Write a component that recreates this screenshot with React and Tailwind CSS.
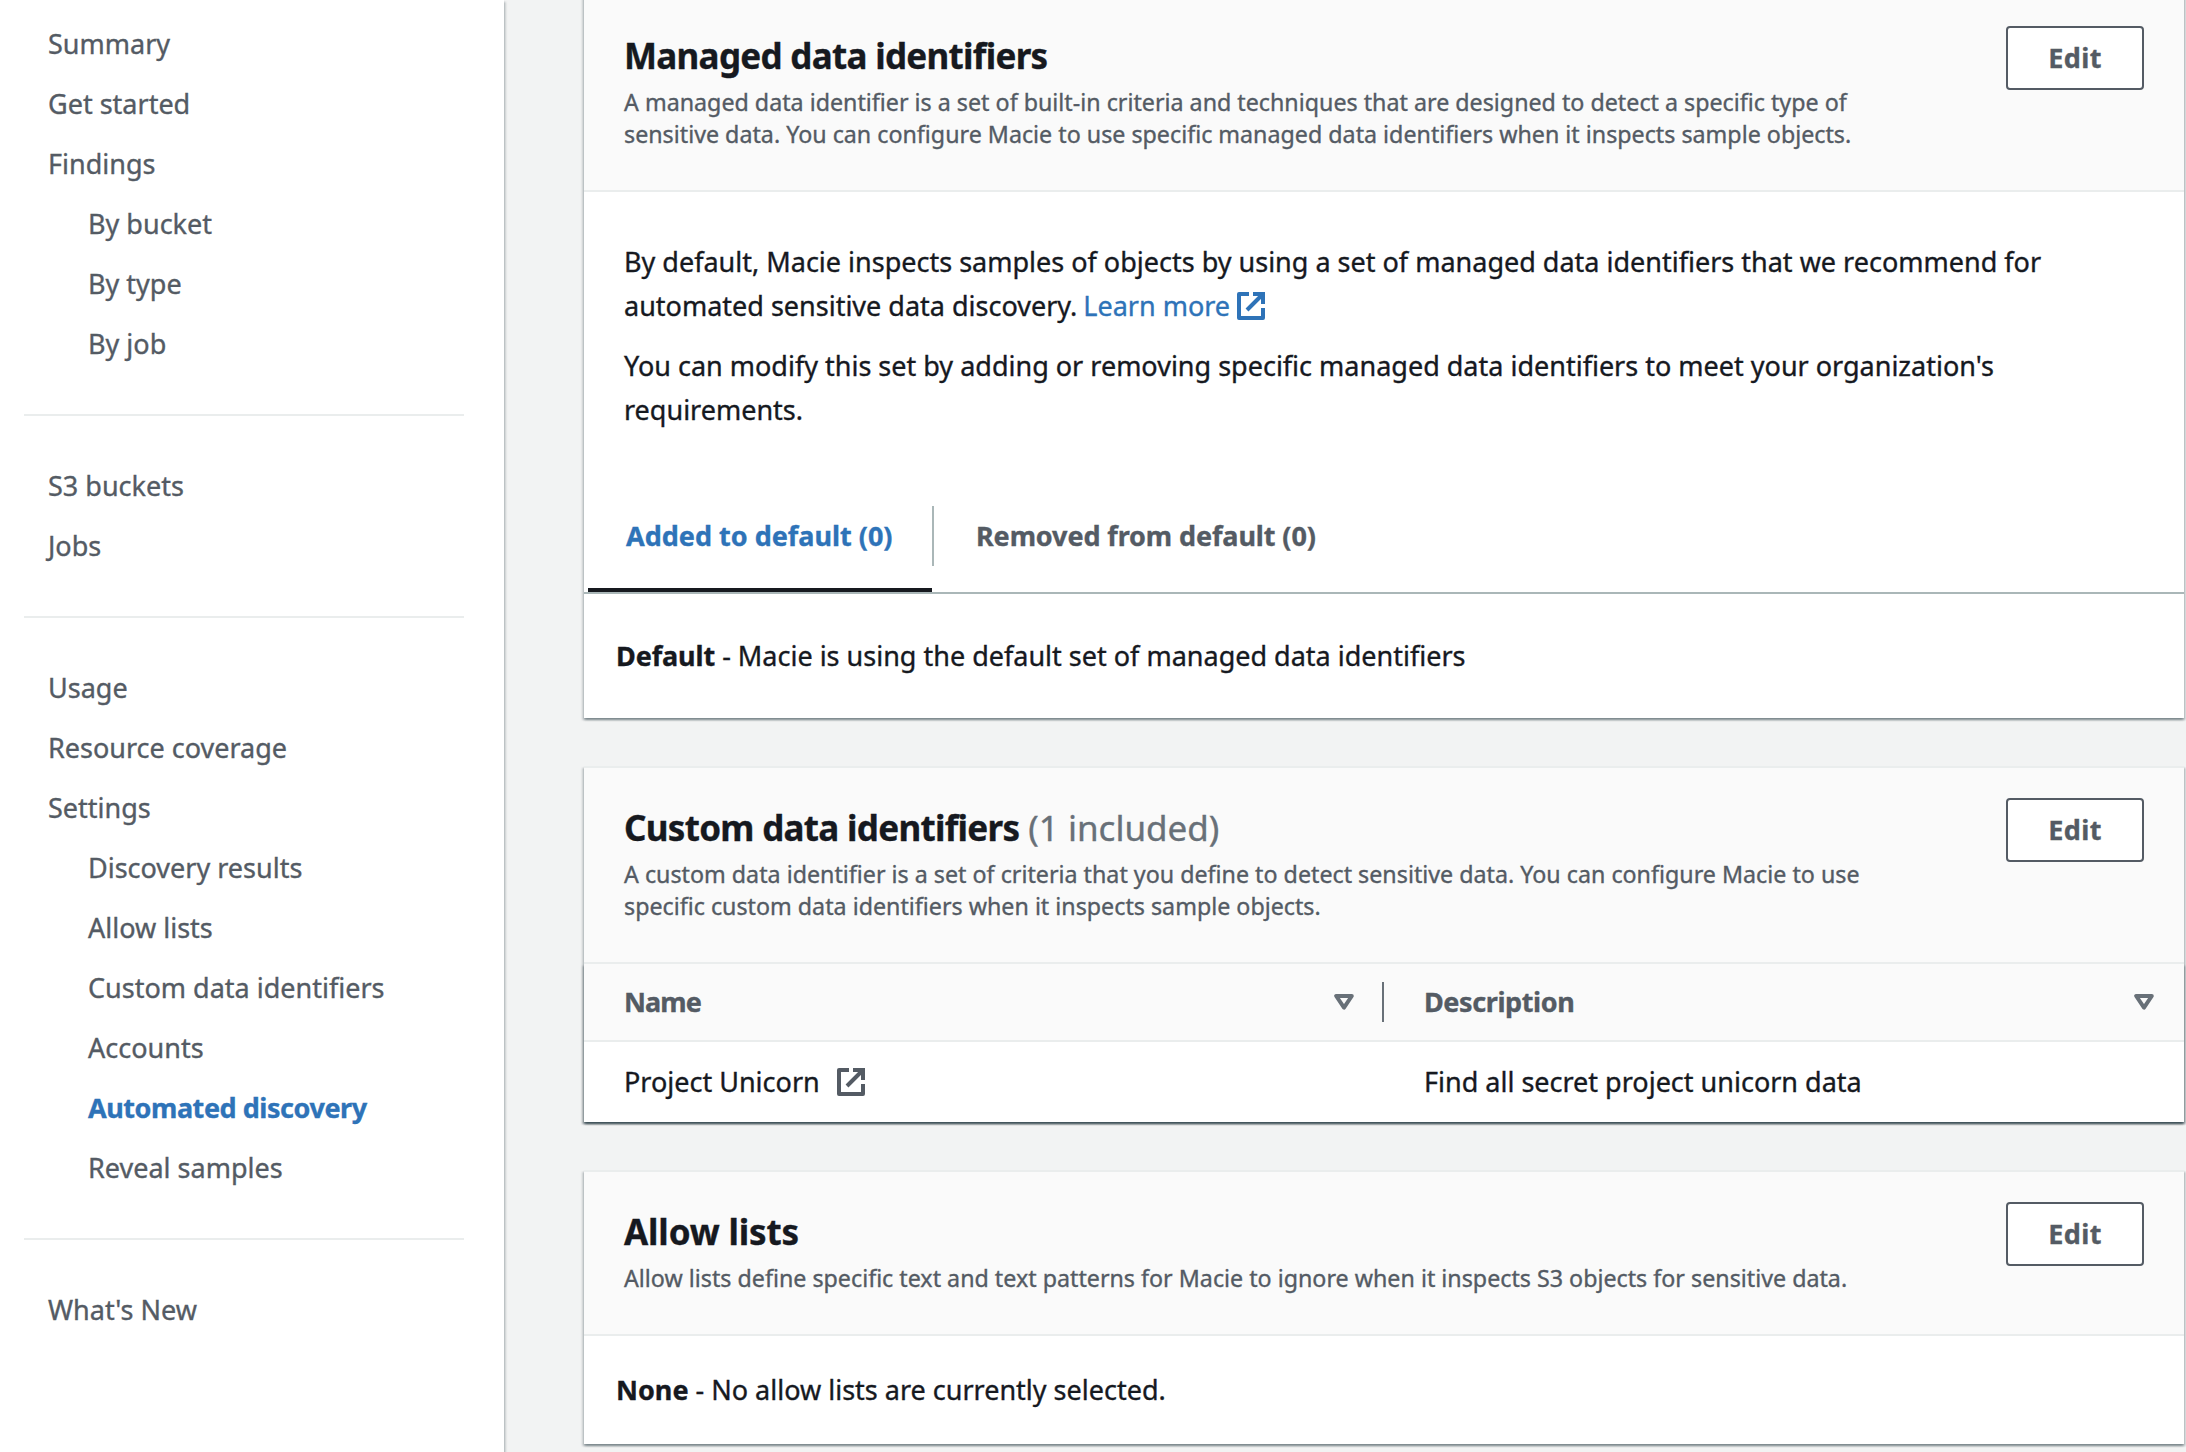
import React from "react";

const CARD_SHADOW =
  "shadow-[0_2px_2px_0_rgba(0,28,36,0.3),2px_2px_2px_0_rgba(0,28,36,0.15),-2px_2px_2px_0_rgba(0,28,36,0.15)]";

const NAV = [
  [
    { label: "Summary" },
    { label: "Get started" },
    { label: "Findings" },
    { label: "By bucket", nested: true },
    { label: "By type", nested: true },
    { label: "By job", nested: true },
  ],
  [{ label: "S3 buckets" }, { label: "Jobs" }],
  [
    { label: "Usage" },
    { label: "Resource coverage" },
    { label: "Settings" },
    { label: "Discovery results", nested: true },
    { label: "Allow lists", nested: true },
    { label: "Custom data identifiers", nested: true },
    { label: "Accounts", nested: true },
    { label: "Automated discovery", nested: true, active: true },
    { label: "Reveal samples", nested: true },
  ],
  [{ label: "What's New" }],
];

function ExternalIcon({ className }) {
  return (
    <svg viewBox="0 0 16 16" fill="none" stroke="currentColor" strokeWidth="2" className={`size-8 shrink-0 ${className}`}>
      <path d="M14 9v5H2V2h5" strokeLinejoin="round" />
      <path d="M9 2h5v5M6 10l8-8" />
    </svg>
  );
}

function SortIcon() {
  return (
    <svg viewBox="0 0 20 16" className="h-4 w-5 text-[#687078]" fill="none" stroke="currentColor" strokeWidth="4" strokeLinejoin="round">
      <path d="M2.2 2h15.6L10 13.6z" />
    </svg>
  );
}

function NavItem({ label, nested, active }) {
  return (
    <li
      className={`flex h-[60px] items-center whitespace-nowrap ${nested ? "pl-[88px]" : "pl-12"} ${
        active ? "font-bold tracking-[-0.45px] text-[#2e73b8]" : ""
      }`}
    >
      {label}
    </li>
  );
}

function Sidebar() {
  return (
    <nav className={`relative w-[504px] shrink-0 bg-white pt-[14px] text-[#545b64] ${CARD_SHADOW}`}>
      {NAV.map((group, i) => (
        <div key={i}>
          {i > 0 && <hr className="my-10 ml-6 w-[440px] border-t-2 border-[#eaeded]" />}
          <ul>
            {group.map((item) => (
              <NavItem key={item.label} {...item} />
            ))}
          </ul>
        </div>
      ))}
    </nav>
  );
}

function CardHeader({ title, titleTracking = "tracking-[-0.7px]", counter, lines }) {
  return (
    <header className="flex justify-between border-b-2 border-[#eaeded] bg-[#fafafa] px-10 pb-10">
      <div className="whitespace-nowrap pt-[38px]">
        <h2 className="flex gap-[9px] text-[35px] leading-[44px]">
          <span className={`font-bold ${titleTracking}`}>{title}</span>
          {counter && <span className="text-[#687078]">{counter}</span>}
        </h2>
        <div className="mt-2 text-[23.25px] leading-8 text-[#545b64]">
          {lines.map((line) => (
            <p key={line}>{line}</p>
          ))}
        </div>
      </div>
      <button className="mt-[30px] h-16 w-[138px] rounded-[4px] border-2 border-[#545b64] bg-white font-bold tracking-[0.4px] text-[#545b64]">
        Edit
      </button>
    </header>
  );
}

function Card({ children }) {
  return <section className={`border-t-2 border-[#eaeded] bg-white ${CARD_SHADOW}`}>{children}</section>;
}

export default function App() {
  return (
    <div className="flex h-[1452px] w-[2186px] overflow-hidden bg-[#f2f3f3] font-['Noto_Sans',sans-serif] text-[27px] leading-[44px] text-[#16191f] [-webkit-text-stroke:0.35px]">
      <Sidebar />
      <main className="-mt-[6px] ml-20 flex w-[1600px] shrink-0 flex-col gap-12">
        <Card>
          <CardHeader
            title="Managed data identifiers"
            lines={[
              "A managed data identifier is a set of built-in criteria and techniques that are designed to detect a specific type of",
              "sensitive data. You can configure Macie to use specific managed data identifiers when it inspects sample objects.",
            ]}
          />
          <div className="flex flex-col gap-4 whitespace-nowrap pt-12 pl-10">
            <div>
              <p>By default, Macie inspects samples of objects by using a set of managed data identifiers that we recommend for</p>
              <p className="flex items-center">
                automated sensitive data discovery.
                <a className="ml-[6px] flex items-center text-[#2e73b8]">
                  Learn more
                  <ExternalIcon className="ml-[5px]" />
                </a>
              </p>
            </div>
            <div>
              <p>You can modify this set by adding or removing specific managed data identifiers to meet your organization's</p>
              <p>requirements.</p>
            </div>
          </div>
          <div className="mt-[74px] flex h-[88px] border-b-2 border-[#aab7b8] font-bold">
            <div className="ml-1 w-[344px] border-b-4 border-[#16191f] pl-[38px] leading-[60px] text-[#2e73b8]">
              Added to default (0)
            </div>
            <span className="h-[60px] w-[2px] bg-[#aab7b8]" />
            <div className="pl-[42px] leading-[60px] tracking-[-0.1px] text-[#545b64]">Removed from default (0)</div>
          </div>
          <p className="flex h-[124px] items-center gap-[7px] pl-8">
            <b className="tracking-[-0.1px]">Default</b> - Macie is using the default set of managed data identifiers
          </p>
        </Card>

        <Card>
          <CardHeader
            title="Custom data identifiers"
            counter="(1 included)"
            lines={[
              "A custom data identifier is a set of criteria that you define to detect sensitive data. You can configure Macie to use",
              "specific custom data identifiers when it inspects sample objects.",
            ]}
          />
          <div className={CARD_SHADOW}>
            <div className="flex h-[78px] items-center border-b-2 border-[#eaeded] bg-[#fafafa] font-bold text-[#545b64]">
              <div className="flex h-10 w-[800px] items-center justify-between border-r-2 border-[#687078] pr-7 pl-10">
                <span className="tracking-[-0.9px]">Name</span>
                <SortIcon />
              </div>
              <div className="flex w-[800px] items-center justify-between pr-[30px] pl-10">
                <span className="tracking-[-0.4px]">Description</span>
                <SortIcon />
              </div>
            </div>
            <div className="flex h-20 items-center bg-white">
              <div className="flex w-[800px] items-center pl-10">
                Project Unicorn
                <ExternalIcon className="ml-[15px] text-[#545b64]" />
              </div>
              <div className="w-[800px] pl-10">Find all secret project unicorn data</div>
            </div>
          </div>
        </Card>

        <Card>
          <CardHeader
            title="Allow lists"
            titleTracking="tracking-[-0.15px]"
            lines={["Allow lists define specific text and text patterns for Macie to ignore when it inspects S3 objects for sensitive data."]}
          />
          <p className="flex h-[108px] items-center gap-[7px] pl-8">
            <b>None</b> - No allow lists are currently selected.
          </p>
        </Card>
      </main>
    </div>
  );
}
